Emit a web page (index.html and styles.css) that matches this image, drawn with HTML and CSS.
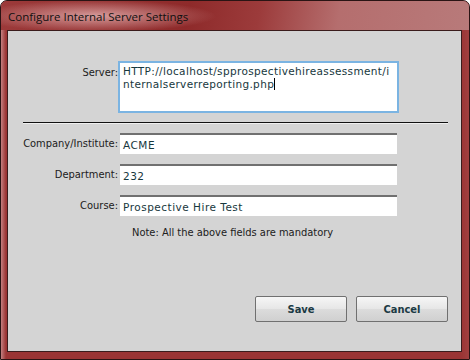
FILE: index.html
```html
<!DOCTYPE html>
<html lang="en">
<head>
    <meta charset="UTF-8">
    <title>Configure Internal Server Settings</title>
    <link rel="stylesheet" href="styles.css">
</head>
<body>
    <div class="window">
        <div class="title-bar">
            <span class="title-text">Configure Internal Server Settings</span>
        </div>
        <div class="client">
            <div class="row server-row">
                <label class="label" for="server">Server:</label>
                <div class="server-box" id="server">HTTP://localhost/spprospectivehireassessment/internalserverreporting.php<span class="caret"></span></div>
            </div>
            <div class="separator"></div>
            <div class="row">
                <label class="label">Company/Institute:</label>
                <div class="field">ACME</div>
            </div>
            <div class="row">
                <label class="label">Department:</label>
                <div class="field">232</div>
            </div>
            <div class="row">
                <label class="label">Course:</label>
                <div class="field">Prospective Hire Test</div>
            </div>
            <div class="note">Note: All the above fields are mandatory</div>
            <div class="buttons">
                <button class="btn">Save</button>
                <button class="btn">Cancel</button>
            </div>
        </div>
    </div>
</body>
</html>
```

FILE: styles.css
```css
body {
    margin: 0;
    padding: 0;
    background: #ffffff;
}
.window {
    width: 470px;
    height: 360px;
    box-sizing: border-box;
    display: flex;
    flex-direction: column;
    border: 1px solid #2a1414;
    border-radius: 7px 7px 0 0;
    background: linear-gradient(90deg, #c48080 0px, #9a3434 5px, #9a3434 calc(100% - 8px), #a04040 100%);
    padding: 0 7px 7px 6px;
    overflow: hidden;
}
.title-bar {
    height: 29px;
    flex: none;
    display: flex;
    align-items: center;
    margin: 0 -7px 0 -6px;
    padding-left: 7px;
    background:
        radial-gradient(ellipse 120px 16px at 95px 15px, rgba(236, 190, 190, 0.75), rgba(236, 190, 190, 0) 100%),
        linear-gradient(100deg, #9c3a3a 0%, #8e2a2a 40%, #9c3b3b 55%, #b56e6e 72%, #b87a7a 100%);
}
.title-text {
    font-family: "Open Sans", sans-serif;
    font-size: 11.5px;
    color: #101010;
    padding-top: 1px;
}
.client {
    flex: 1;
    background: #d4d4d4;
    border: 1px solid #3a1c1c;
    font-family: "DejaVu Sans Condensed", "DejaVu Sans", sans-serif;
    font-size: 11px;
    color: #202020;
    padding-top: 30px;
}
.row {
    display: flex;
    align-items: center;
    margin-bottom: 10px;
}
.label {
    width: 110px;
    text-align: right;
    flex: none;
}
.server-row {
    align-items: flex-start;
    margin-bottom: 9px;
}
.server-row .label {
    padding-top: 5px;
}
.server-box {
    width: 281px;
    height: 52px;
    box-sizing: border-box;
    border: 2px solid #7bb4e2;
    background: #ffffff;
    padding: 2px 3px;
    font-family: "DejaVu Sans", sans-serif;
    font-size: 10.5px;
    letter-spacing: 0.35px;
    line-height: 13px;
    color: #17373d;
    word-break: break-all;
}
.caret {
    display: inline-block;
    width: 1px;
    height: 12px;
    background: #000000;
    vertical-align: -2px;
}
.separator {
    height: 1px;
    background: #111111;
    border-bottom: 1px solid #efefef;
    margin: 0 13px 9px 15px;
}
.field {
    width: 277px;
    height: 21px;
    box-sizing: border-box;
    margin-left: 2px;
    background: #ffffff;
    border-top: 2px solid #707070;
    padding: 1px 3px 0;
    font-family: "DejaVu Sans", sans-serif;
    font-size: 10.5px;
    letter-spacing: 0.5px;
    line-height: 18px;
    color: #17373d;
}
.note {
    padding-left: 124px;
    margin-top: 6px;
    color: #202020;
}
.buttons {
    display: flex;
    justify-content: flex-end;
    gap: 9px;
    margin-top: 57px;
    padding-right: 13px;
}
.btn {
    width: 92px;
    height: 26px;
    border: 1px solid #707070;
    border-radius: 2px;
    background: linear-gradient(#f6f6f6, #e6e6e6 50%, #dcdcdc 50%, #d0d0d0);
    font-family: "DejaVu Sans Condensed", "DejaVu Sans", sans-serif;
    font-size: 11px;
    font-weight: bold;
    color: #1b3a44;
    padding: 0;
}
```
